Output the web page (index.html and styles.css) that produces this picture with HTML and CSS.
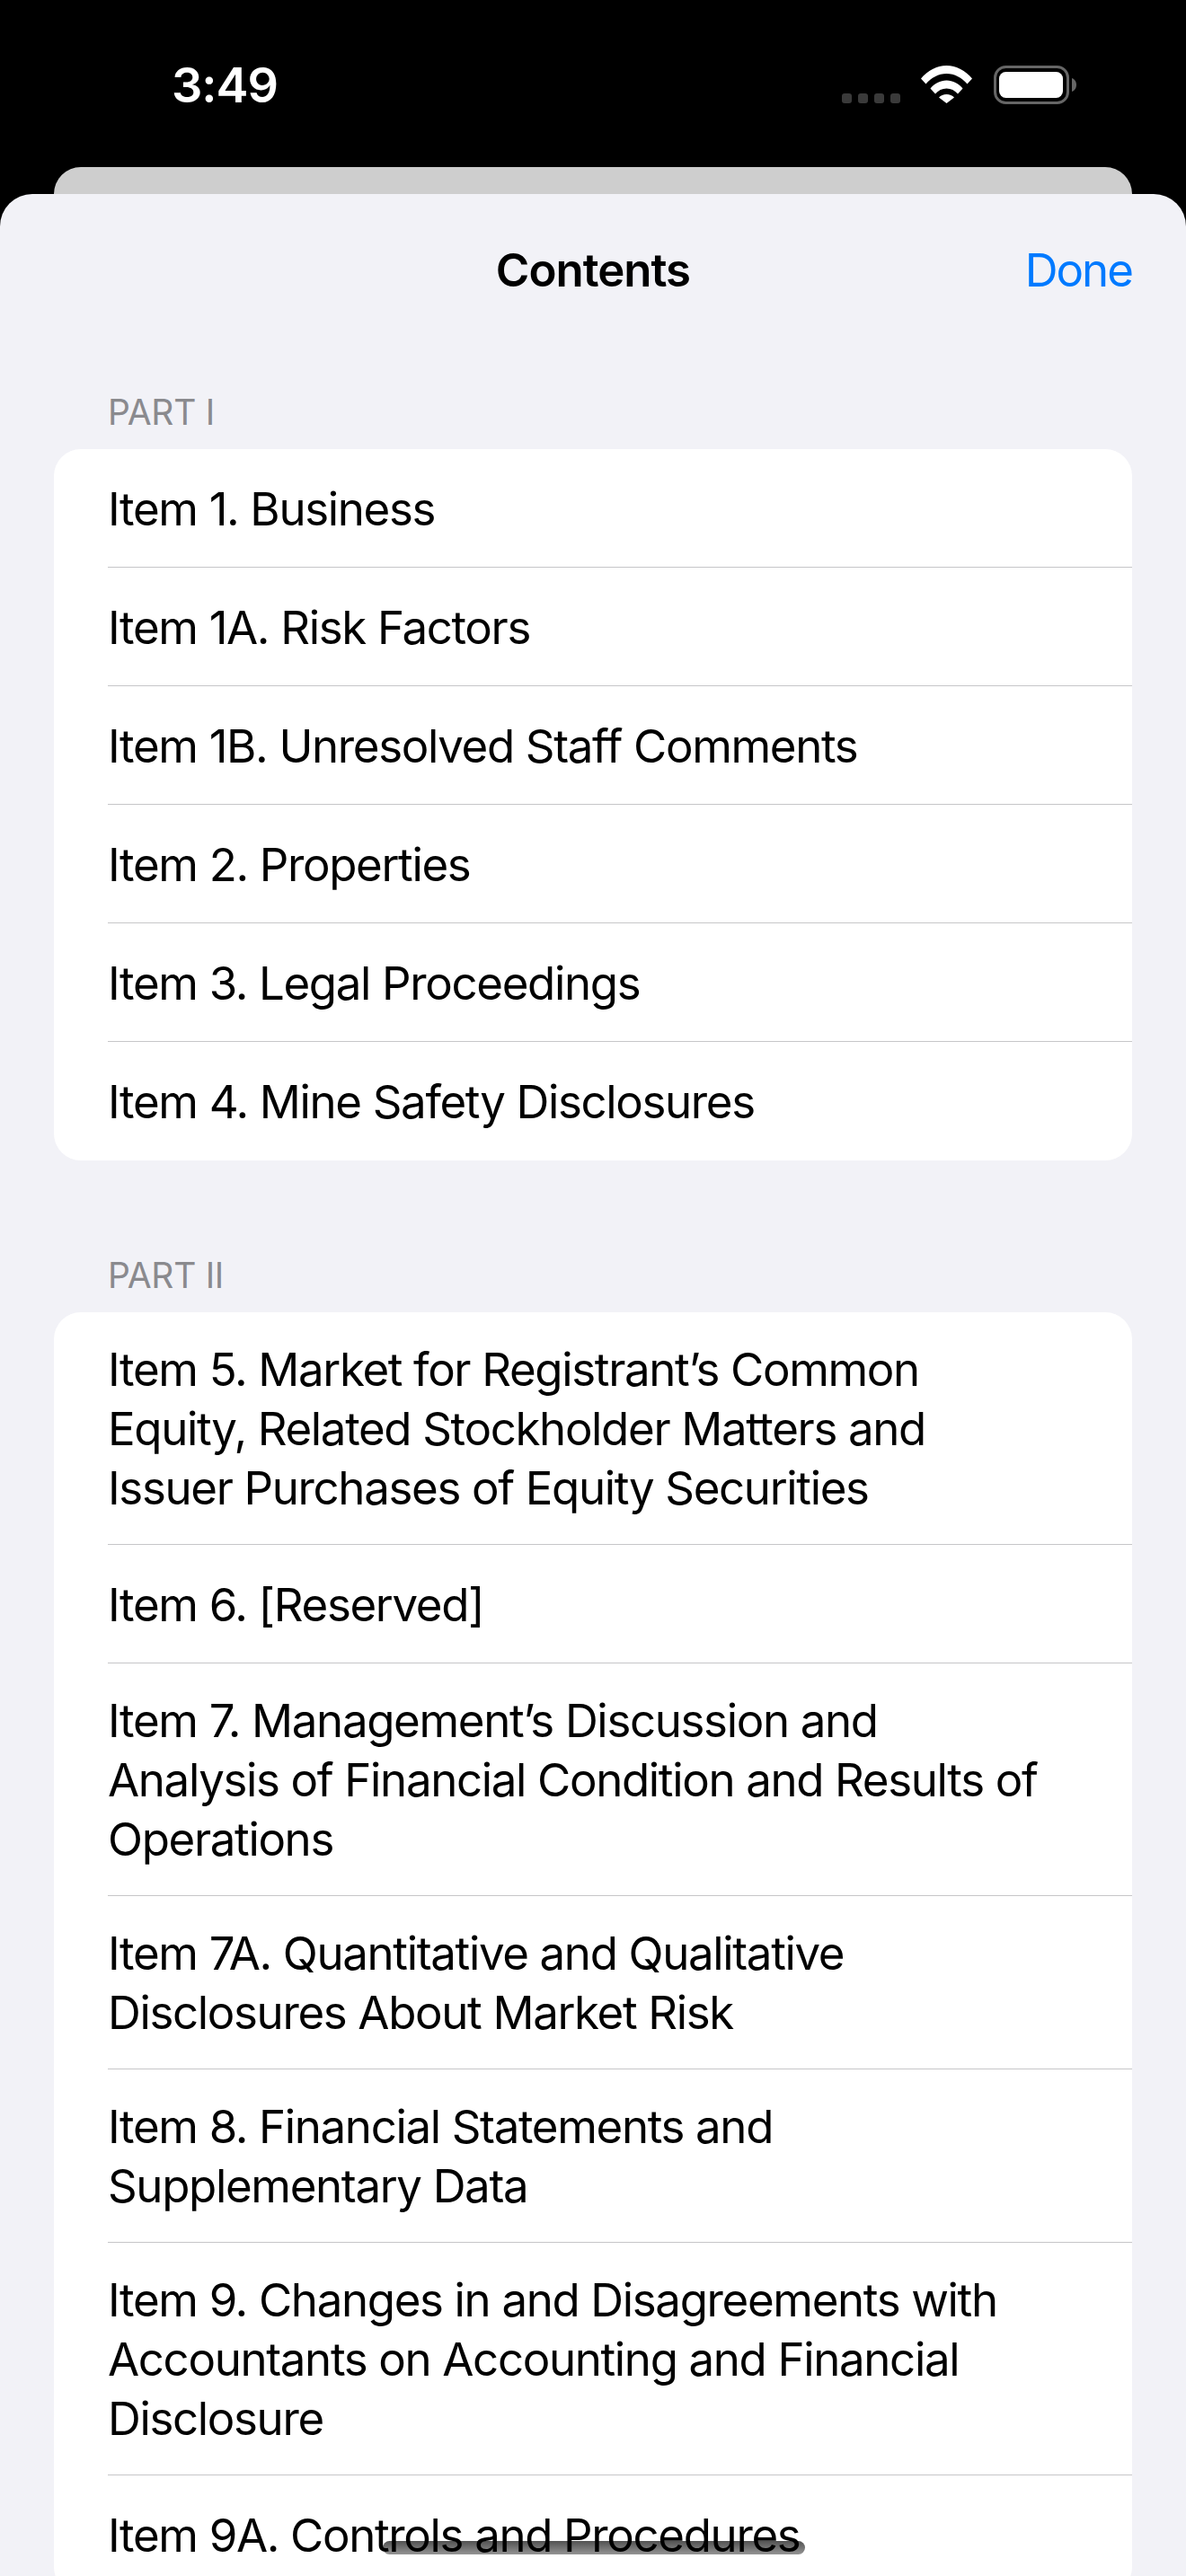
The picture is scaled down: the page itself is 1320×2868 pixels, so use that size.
FILE: index.html
```html
<!DOCTYPE html>
<html lang="en">
<head>
    <meta charset="UTF-8">
    <meta name="viewport" content="width=device-width, initial-scale=1.0">
    <title>Contents</title>
    <link rel="stylesheet" href="styles.css">
</head>
<body>

<div class="status-bar">
    <div class="status-time">3:49</div>
    <div class="status-icons">
        <div class="signal-dots">
            <span></span><span></span><span></span><span></span>
        </div>
        <svg class="wifi-icon" viewBox="0 0 57 42">
            <path d="M0 14.5C7.5 5.5 17.5 0 28.5 0S49.500 5.500 57 14.500L51.500 20.500C45.500 13.500 37.500 9 28.500 9S11.500 13.500 5.500 20.500Z" fill="#fff"/>
            <path d="M10.500 25.500C15 20 21.500 16.500 28.500 16.500S42 20 46.500 25.500L41 31.500C37.500 27.500 33.500 25.500 28.500 25.500S19.500 27.500 16 31.500Z" fill="#fff"/>
            <path d="M20 35.500C22 33.500 25 32 28.500 32S35 33.500 37 35.500L28.500 42Z" fill="#fff"/>
        </svg>
        <svg class="battery-icon" viewBox="0 0 92 43">
            <rect x="1.500" y="1.500" width="81" height="40" rx="12" fill="none" stroke="#666" stroke-width="3"/>
            <rect x="6" y="7" width="71" height="29" rx="7.500" fill="#fff"/>
            <path d="M87 14C90 15 92 18 92 21.500S90 28 87 29Z" fill="#666"/>
        </svg>
    </div>
</div>

<div class="back-card"></div>

<div class="sheet">
    <div class="nav-bar">
        <div class="nav-title">Contents</div>
        <div class="nav-done">Done</div>
    </div>

    <div class="section">
        <div class="section-header">PART I</div>
        <div class="list-card">
            <div class="list-row"><span>Item 1. Business</span></div>
            <div class="list-row"><span>Item 1A. Risk Factors</span></div>
            <div class="list-row"><span>Item 1B. Unresolved Staff Comments</span></div>
            <div class="list-row"><span>Item 2. Properties</span></div>
            <div class="list-row"><span>Item 3. Legal Proceedings</span></div>
            <div class="list-row"><span>Item 4. Mine Safety Disclosures</span></div>
        </div>
    </div>

    <div class="section">
        <div class="section-header">PART II</div>
        <div class="list-card">
            <div class="list-row"><span>Item 5. Market for Registrant’s Common<br>Equity, Related Stockholder Matters and<br>Issuer Purchases of Equity Securities</span></div>
            <div class="list-row"><span>Item 6. [Reserved]</span></div>
            <div class="list-row"><span>Item 7. Management’s Discussion and<br>Analysis of Financial Condition and Results of<br>Operations</span></div>
            <div class="list-row"><span>Item 7A. Quantitative and Qualitative<br>Disclosures About Market Risk</span></div>
            <div class="list-row"><span>Item 8. Financial Statements and<br>Supplementary Data</span></div>
            <div class="list-row"><span>Item 9. Changes in and Disagreements with<br>Accountants on Accounting and Financial<br>Disclosure</span></div>
            <div class="list-row"><span>Item 9A. Controls and Procedures</span></div>
        </div>
    </div>
</div>

<div class="home-indicator"></div>

</body>
</html>
```

FILE: styles.css
```css
* {
    box-sizing: border-box;
}

body {
    font-family: Inter, 'Noto Sans', sans-serif;
    margin: 0;
    width: 1320px;
    height: 2868px;
    overflow: hidden;
    position: relative;
    background-color: #000;
}

/* Status bar */
.status-bar {
    height: 186px;
    display: flex;
    justify-content: space-between;
    padding: 73px 122px 0 191px;
}

.status-time {
    color: #fff;
    font-size: 54px;
    font-weight: 600;
    line-height: 44px;
    letter-spacing: -1px;
}

.status-icons {
    display: flex;
    align-items: flex-start;
}

.signal-dots {
    display: flex;
    gap: 7px;
    margin-top: 31px;
    margin-right: 23px;
}

.signal-dots span {
    width: 11px;
    height: 11px;
    border-radius: 3px;
    background-color: #3a3a3a;
}

.wifi-icon {
    width: 57px;
    height: 42px;
    margin-right: 24px;
}

.battery-icon {
    width: 92px;
    height: 43px;
}

/* Card peeking out behind the sheet */
.back-card {
    height: 30px;
    margin: 0 60px;
    background-color: #cecece;
    border-radius: 30px 30px 0 0;
}

/* Sheet */
.sheet {
    height: 2652px;
    background-color: #f2f2f7;
    border-radius: 36px 36px 0 0;
    overflow: hidden;
}

.nav-bar {
    height: 168px;
    display: grid;
    grid-template-columns: 1fr auto 1fr;
    align-items: center;
    padding: 0 60px;
    font-size: 51px;
}

.nav-title {
    grid-column: 2;
    color: #000;
    font-weight: 600;
    letter-spacing: -1px;
}

.nav-done {
    justify-self: end;
    color: #007aff;
    letter-spacing: -2px;
}

/* Sections */
.section {
    margin: 52px 60px 105px;
}

.section-header {
    padding-left: 60px;
    margin-bottom: 18px;
    color: #8a8a8e;
    font-size: 39px;
    line-height: 46px;
    letter-spacing: -0.300px;
}

.list-card {
    background-color: #fff;
    border-radius: 30px;
    padding-left: 60px;
}

.list-row {
    display: flex;
    align-items: center;
    padding: 31px 0 29px;
    min-height: 132px;
    color: #000;
    font-size: 51px;
    line-height: 66px;
    letter-spacing: -1.350px;
    border-bottom: 1px solid #c6c6c8;
}

.list-row:last-child {
    border-bottom: none;
}

.home-indicator {
    position: absolute;
    left: 426px;
    top: 2829px;
    width: 470px;
    height: 15px;
    border-radius: 8px;
    background: linear-gradient(rgba(0, 0, 0, 0.68), rgba(0, 0, 0, 0.42));
}
```
